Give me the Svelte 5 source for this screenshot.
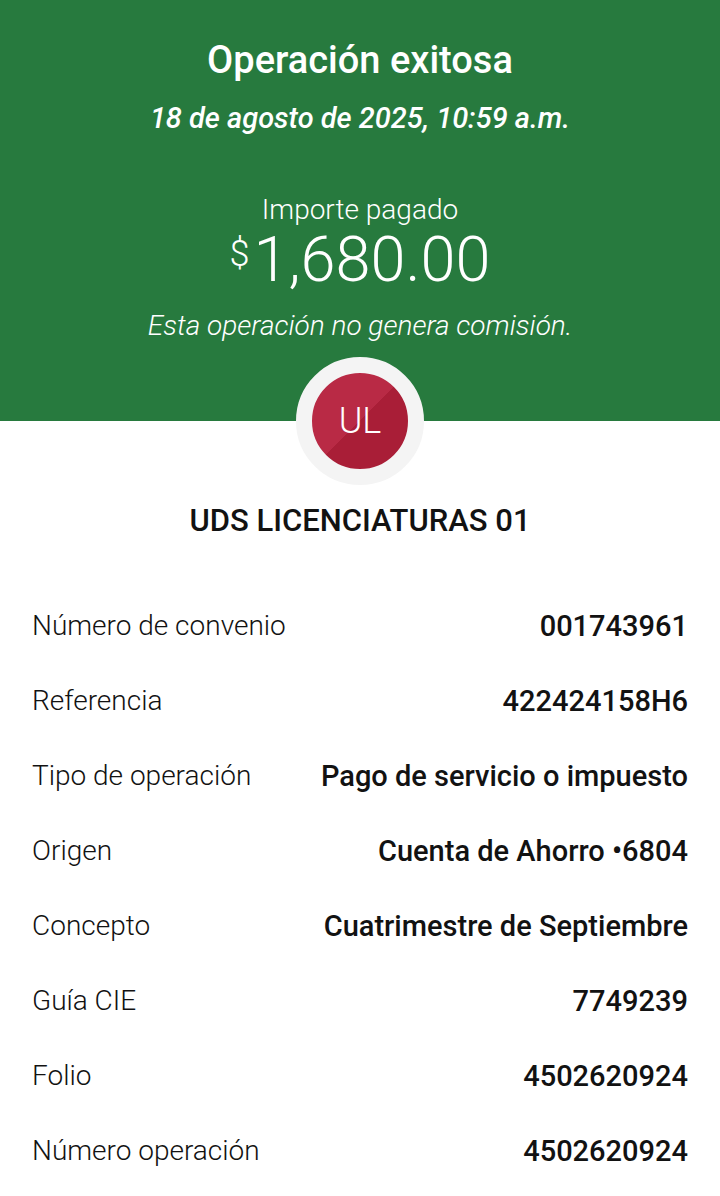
<script lang="ts">
  interface Detail {
    label: string;
    value: string;
  }

  const details: Detail[] = [
    { label: 'Número de convenio', value: '001743961' },
    { label: 'Referencia', value: '422424158H6' },
    { label: 'Tipo de operación', value: 'Pago de servicio o impuesto' },
    { label: 'Origen', value: 'Cuenta de Ahorro •6804' },
    { label: 'Concepto', value: 'Cuatrimestre de Septiembre' },
    { label: 'Guía CIE', value: '7749239' },
    { label: 'Folio', value: '4502620924' },
    { label: 'Número operación', value: '4502620924' }
  ];
</script>

<main class="receipt">
  <header class="summary">
    <h1>Operación exitosa</h1>
    <p class="date">18 de agosto de 2025, 10:59 a.m.</p>
    <p class="caption">Importe pagado</p>
    <p class="amount"><span class="currency">$</span><span>1,680.00</span></p>
    <p class="fee">Esta operación no genera comisión.</p>
  </header>

  <div class="avatar"><span>UL</span></div>

  <h2>UDS LICENCIATURAS 01</h2>

  <dl class="details">
    {#each details as { label, value }}
      <div class="row">
        <dt>{label}</dt>
        <dd>{value}</dd>
      </div>
    {/each}
  </dl>
</main>

<style>
  :global(body) {
    margin: 0;
    background: #fff;
  }

  .receipt {
    font-family: Roboto, 'Noto Sans', sans-serif;
    color: #121212;
    background: #fff;
    overflow: hidden;
  }

  h1,
  h2,
  p,
  dl,
  dd {
    margin: 0;
  }

  .summary {
    display: flex;
    flex-direction: column;
    align-items: center;
    padding: 36px 32px 75px;
    background: #277a3e;
    color: #fff;
    text-align: center;
  }

  h1 {
    font-size: 38px;
    line-height: 48px;
    font-weight: 500;
  }

  .date {
    margin-top: 14px;
    font-size: 29px;
    line-height: 40px;
    font-weight: 500;
    font-style: italic;
  }

  .caption {
    margin-top: 52px;
    font-size: 28px;
    line-height: 40px;
    font-weight: 300;
  }

  .amount {
    display: flex;
    align-items: flex-start;
    gap: 4px;
    font-size: 63px;
    line-height: 60px;
    font-weight: 300;
  }

  .currency {
    font-size: 36px;
    line-height: 48px;
  }

  .fee {
    margin-top: 16px;
    font-size: 28px;
    line-height: 40px;
    font-weight: 300;
    font-style: italic;
  }

  .avatar {
    position: relative;
    display: grid;
    place-items: center;
    box-sizing: border-box;
    width: 128px;
    height: 128px;
    margin: -64px auto 0;
    border: 16px solid #f4f4f4;
    border-radius: 50%;
    background: linear-gradient(135deg, #b92a45 50%, #a91e37 50%);
    color: #fff;
    font-size: 36px;
    line-height: 40px;
    font-weight: 300;
  }

  h2 {
    margin-top: 16px;
    font-size: 31px;
    line-height: 40px;
    font-weight: 500;
    text-align: center;
  }

  .details {
    padding: 48px 32px 8px;
  }

  .row {
    display: flex;
    justify-content: space-between;
    align-items: center;
    gap: 16px;
    padding: 17px 0 18px;
    line-height: 40px;
  }

  dt {
    font-size: 28px;
    font-weight: 300;
  }

  dd {
    font-size: 29px;
    font-weight: 500;
    text-align: right;
  }
</style>
